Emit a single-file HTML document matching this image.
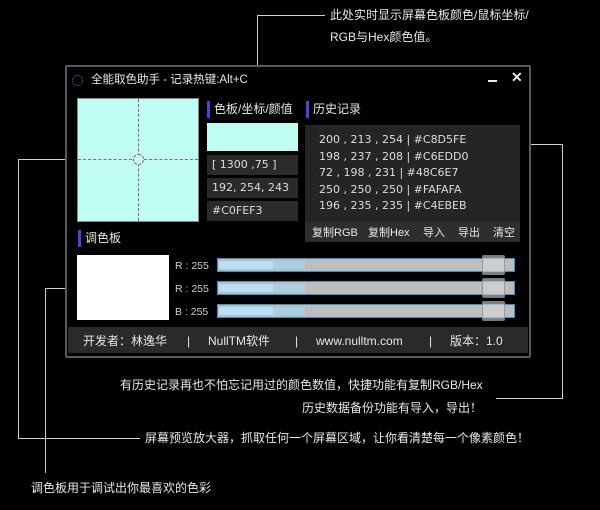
<!DOCTYPE html>
<html><head><meta charset="utf-8"><style>
*{margin:0;padding:0;box-sizing:border-box}
body{width:600px;height:510px;background:#000;position:relative;overflow:hidden;font-family:"Liberation Sans","Noto Sans CJK SC",sans-serif;color:#e8e8e8}
.a{position:absolute}
.t{position:absolute;white-space:nowrap;font-size:12px;line-height:14px}
.ln{position:absolute;background:#cfcfcf}
.box{position:absolute;background:#2a2a2a;font-size:11px;color:#ddd;padding-left:5px;line-height:20px;font-family:"DejaVu Sans","Noto Sans CJK SC",sans-serif}
.bar{position:absolute;width:3px;height:17px;background:#5a3ad8}
.sl{position:absolute;left:217px;width:298px;height:14px;border:1px solid #3f8fc8;background:#bdbdbd}
.sl i{position:absolute;left:1px;top:2px;height:8px;width:54px;background:#b5e0f5}
.sl b{position:absolute;left:55px;top:2px;height:8px;width:32px;background:#a9cfe2}
.th{position:absolute;left:482px;width:23px;height:20px;background:rgba(215,215,215,.6);border:1px solid rgba(120,120,120,.6);border-radius:2px}
</style></head><body>
<!-- annotation lines -->
<div class="ln" style="left:257px;top:15px;width:68px;height:1px"></div>
<div class="ln" style="left:257px;top:15px;width:1px;height:81px"></div>
<div class="t" style="left:330px;top:8px;font-size:12px">此处实时显示屏幕色板颜色/鼠标坐标/</div>
<div class="t" style="left:330px;top:30px;font-size:12px">RGB与Hex颜色值。</div>

<div class="ln" style="left:496px;top:144px;width:67px;height:1px"></div>
<div class="ln" style="left:562px;top:144px;width:1px;height:255px"></div>
<div class="ln" style="left:496px;top:398px;width:67px;height:1px"></div>
<div class="t" style="left:120px;top:378px">有历史记录再也不怕忘记用过的颜色数值，快捷功能有复制RGB/Hex</div>
<div class="t" style="left:302px;top:401px">历史数据备份功能有导入，导出！</div>

<div class="ln" style="left:18px;top:159px;width:60px;height:1px"></div>
<div class="ln" style="left:18px;top:159px;width:1px;height:279px"></div>
<div class="ln" style="left:18px;top:438px;width:122px;height:1px"></div>
<div class="t" style="left:145px;top:431px">屏幕预览放大器，抓取任何一个屏幕区域，让你看清楚每一个像素颜色！</div>

<div class="ln" style="left:45px;top:288px;width:33px;height:1px"></div>
<div class="ln" style="left:45px;top:288px;width:1px;height:185px"></div>
<div class="t" style="left:31px;top:481px">调色板用于调试出你最喜欢的色彩</div>

<!-- window -->
<div class="a" style="left:65px;top:65px;width:466px;height:293px;border:2px solid #5a5a5a;border-radius:2px;background:#000"></div>
<div class="a" style="left:72px;top:75px;width:11px;height:11px;border:1px dotted #6a6ad0;border-radius:50%"></div>
<div class="t" style="left:91px;top:73px;font-size:11.5px">全能取色助手 - 记录热键:Alt+C</div>
<div class="a" style="left:488px;top:80px;width:9px;height:2px;background:#eee"></div>
<div class="t" style="left:511px;top:70px;font-size:14px;font-weight:bold">✕</div>

<!-- magnifier -->
<div class="a" style="left:77px;top:98px;width:122px;height:124px;background:#c0fef3;border:1px solid #888"></div>
<div class="a" style="left:138px;top:99px;width:0;height:122px;border-left:1px dashed #8a6a50"></div>
<div class="a" style="left:78px;top:159px;width:120px;height:0;border-top:1px dashed #8a6a50"></div>
<div class="a" style="left:133px;top:154px;width:11px;height:11px;border:1px dashed #a05040;border-radius:50%;background:#c0fef3"></div>

<div class="bar" style="left:207px;top:101px"></div>
<div class="t" style="left:214px;top:102px">色板/坐标/颜值</div>
<div class="a" style="left:207px;top:123px;width:91px;height:28px;background:#c0fef3"></div>
<div class="box" style="left:207px;top:155px;width:91px;height:20px">[ 1300 ,75 ]</div>
<div class="box" style="left:207px;top:178px;width:91px;height:20px">192, 254, 243</div>
<div class="box" style="left:207px;top:201px;width:91px;height:20px">#C0FEF3</div>

<div class="bar" style="left:306px;top:101px"></div>
<div class="t" style="left:313px;top:102px">历史记录</div>
<div class="a" style="left:305px;top:125px;width:215px;height:117px;background:#252525"></div>
<div class="a" style="left:305px;top:222px;width:215px;height:20px;background:#2e2e2e"></div>
<div class="t" style="left:319px;top:132px;font-size:11px;font-family:'DejaVu Sans',sans-serif;color:#ddd;line-height:16.5px">200 , 213 , 254 | #C8D5FE<br>198 , 237 , 208 | #C6EDD0<br>72 , 198 , 231 | #48C6E7<br>250 , 250 , 250 | #FAFAFA<br>196 , 235 , 235 | #C4EBEB</div>
<div class="t" style="left:312px;top:226px;font-size:11px">复制RGB</div>
<div class="t" style="left:368px;top:226px;font-size:11px">复制Hex</div>
<div class="t" style="left:423px;top:226px;font-size:11px">导入</div>
<div class="t" style="left:458px;top:226px;font-size:11px">导出</div>
<div class="t" style="left:493px;top:226px;font-size:11px">清空</div>

<div class="bar" style="left:78px;top:230px"></div>
<div class="t" style="left:85px;top:231px">调色板</div>
<div class="a" style="left:77px;top:255px;width:92px;height:65px;background:#fff"></div>
<div class="t" style="left:175px;top:259px;font-size:10.5px;color:#ccc">R : 255</div>
<div class="t" style="left:175px;top:282px;font-size:10.5px;color:#ccc">R : 255</div>
<div class="t" style="left:175px;top:305px;font-size:10.5px;color:#ccc">B : 255</div>
<div class="sl" style="top:258px"><i></i><b></b></div>
<div class="sl" style="top:281px"><i></i><b></b></div>
<div class="sl" style="top:304px"><i></i><b></b></div>
<div class="th" style="top:255px"></div>
<div class="th" style="top:278px"></div>
<div class="th" style="top:301px"></div>

<div class="a" style="left:68px;top:327px;width:460px;height:26px;background:#2a2a2a"></div>
<div class="t" style="left:83px;top:334px">开发者：林逸华</div>
<div class="t" style="left:187px;top:334px">|</div>
<div class="t" style="left:208px;top:334px">NullTM软件</div>
<div class="t" style="left:295px;top:334px">|</div>
<div class="t" style="left:316px;top:334px">www.nulltm.com</div>
<div class="t" style="left:429px;top:334px">|</div>
<div class="t" style="left:450px;top:334px">版本：1.0</div>
</body></html>
